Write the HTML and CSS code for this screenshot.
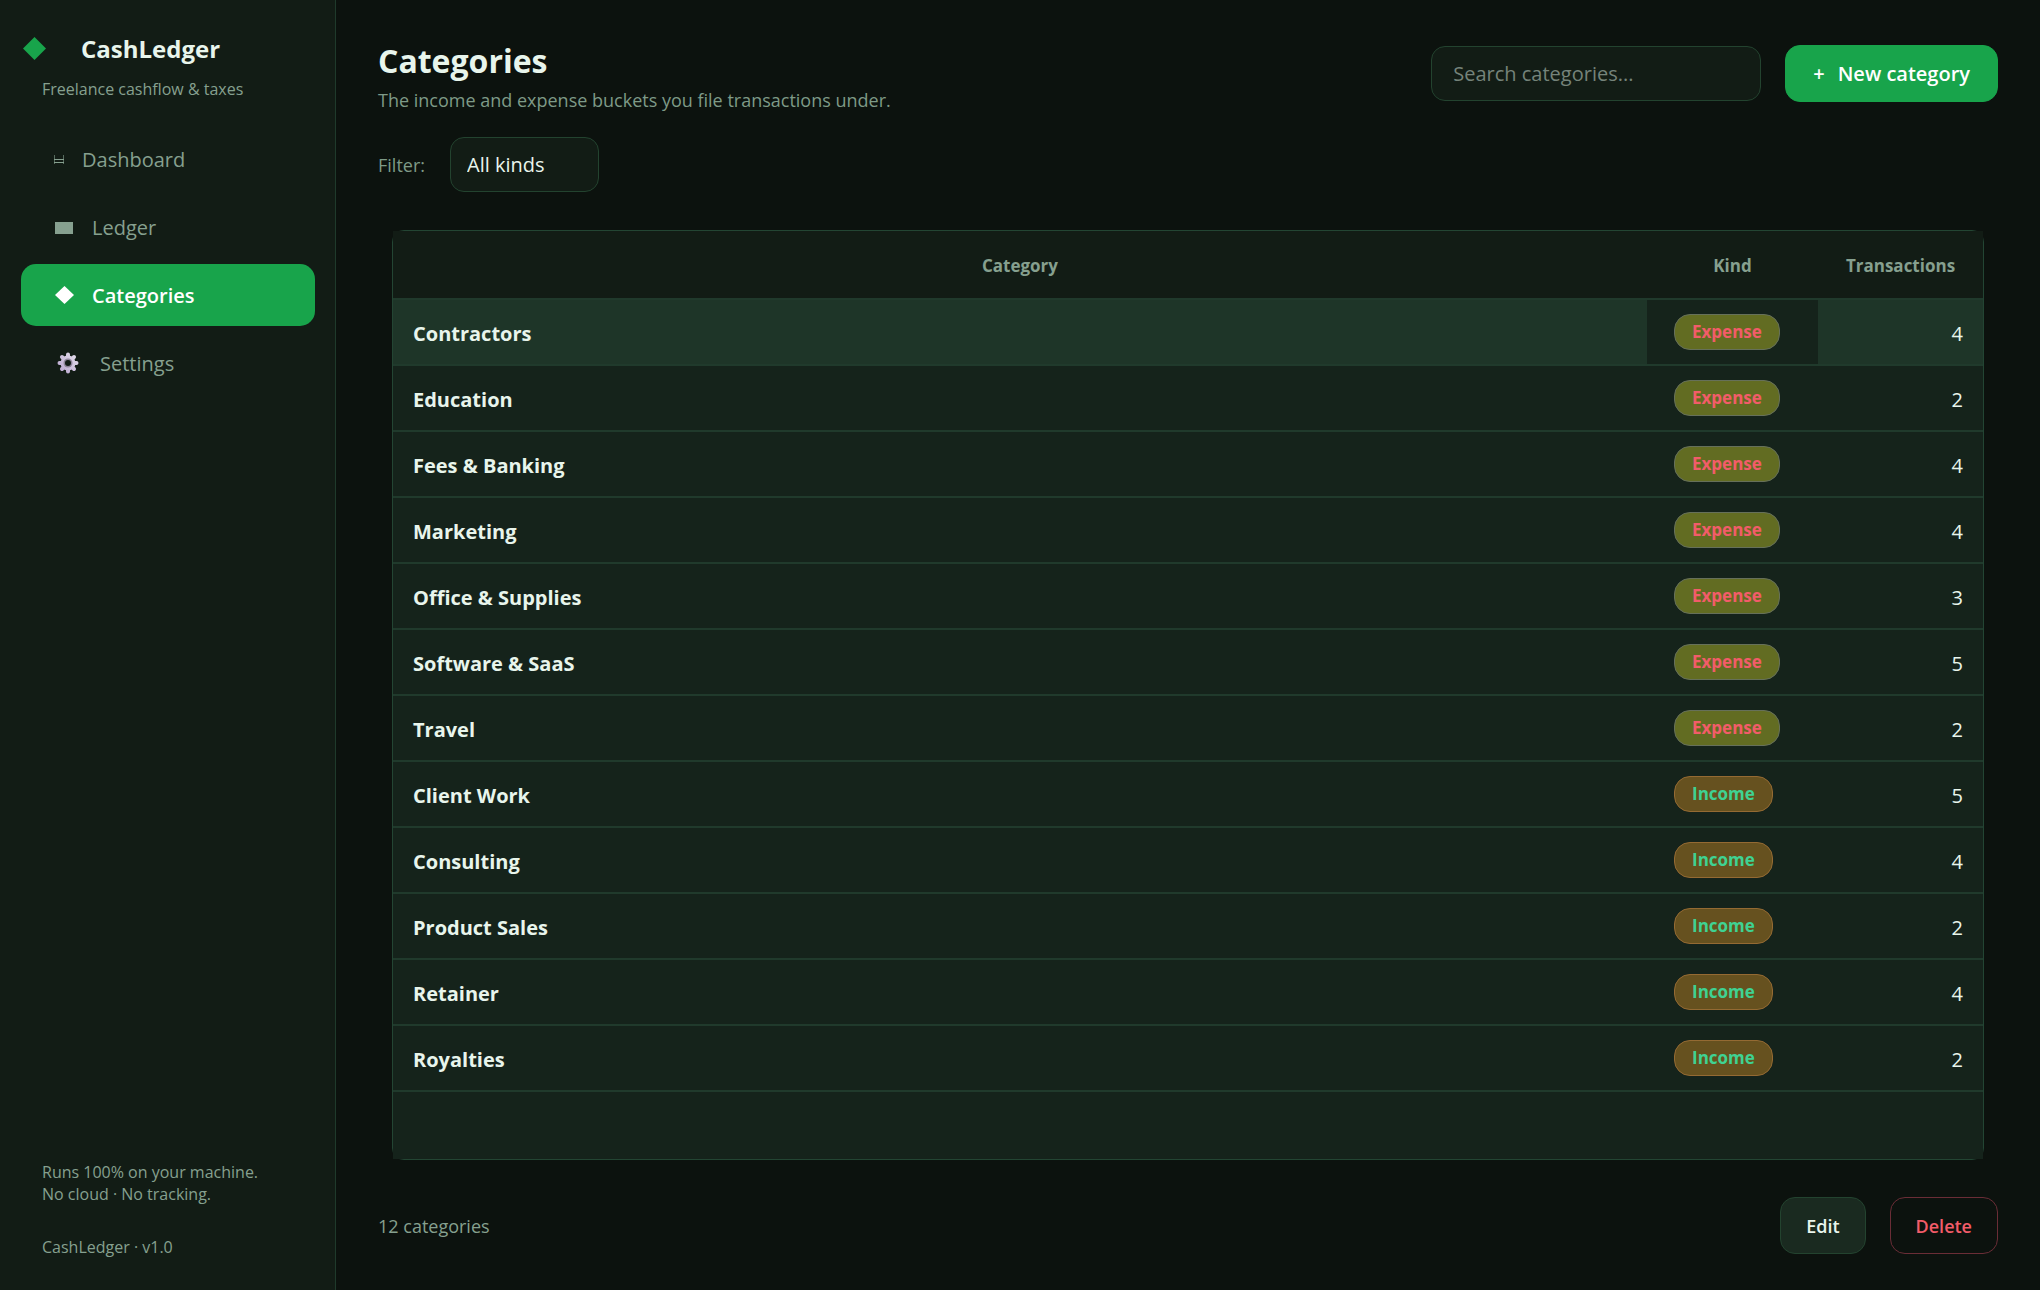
FILE: index.html
```html
<!DOCTYPE html>
<html lang="en">
<head>
  <meta charset="UTF-8" />
  <meta name="viewport" content="width=device-width, initial-scale=1" />
  <title>CashLedger - Categories</title>
  <link rel="stylesheet" href="styles.css">
</head>
<body>

  <!-- Sidebar -->
  <aside class="sidebar">
    <div class="brand">
      <svg class="brand-mark" viewBox="0 0 24 24"><path d="M11.5 0 23 11.5 11.5 23 0 11.5z" fill="currentColor"/></svg>
      <span class="brand-name">CashLedger</span>
    </div>
    <p class="tagline">Freelance cashflow &amp; taxes</p>

    <nav class="nav">
      <a href="#" class="nav-item">
        <svg class="icon-dashboard" viewBox="0 0 10 12"><path d="M0.5 2v9M9.5 2v9" fill="none" stroke="currentColor" opacity="0.6"/><path d="M0 6.5h10M0 9.5h10" fill="none" stroke="currentColor"/></svg>
        Dashboard
      </a>
      <a href="#" class="nav-item">
        <svg class="icon" viewBox="0 0 20 20"><path d="M1 5h18v12H1z" fill="currentColor"/></svg>
        Ledger
      </a>
      <a href="#" class="nav-item active">
        <svg class="icon" viewBox="0 0 20 20"><path d="M10.5 1 20 10 10.5 19 1 10z" fill="currentColor"/></svg>
        Categories
      </a>
      <a href="#" class="nav-item">
        <svg class="icon-gear" viewBox="-3 0 28 22">
          <defs>
            <linearGradient id="gear" x1="22" y1="0" x2="0" y2="22" gradientUnits="userSpaceOnUse">
              <stop offset="0" stop-color="#e8e4ee"/>
              <stop offset="1" stop-color="#b39fcb"/>
            </linearGradient>
          </defs>
          <g stroke="url(#gear)" stroke-width="4" stroke-linecap="round">
            <path d="M11 2.5v17M2.5 11h17M5 5l12 12M17 5 5 17"/>
          </g>
          <circle cx="11" cy="11" r="7.5" fill="url(#gear)"/>
          <circle cx="11" cy="11" r="4.5" fill="#8d8499"/>
          <circle cx="11" cy="11" r="3" fill="#121c16"/>
        </svg>
        Settings
      </a>
    </nav>

    <div class="side-foot">
      <p>Runs 100% on your machine.<br>No cloud · No tracking.</p>
      <p>CashLedger · v1.0</p>
    </div>
  </aside>

  <!-- Main content -->
  <main class="main">
    <header class="header">
      <div class="titles">
        <h1>Categories</h1>
        <p>The income and expense buckets you file transactions under.</p>
      </div>
      <input type="text" class="search" placeholder="Search categories..." aria-label="Search categories">
      <button class="btn primary"><span class="plus">+</span>New category</button>
    </header>

    <div class="filter">
      <label for="kind">Filter:</label>
      <select id="kind">
        <option>All kinds</option>
        <option>Expense</option>
        <option>Income</option>
      </select>
    </div>

    <div class="table-frame">
      <div class="table-fill">
        <table>
          <thead>
            <tr><th>Category</th><th class="col-kind">Kind</th><th class="col-count">Transactions</th></tr>
          </thead>
          <tbody>
            <tr class="selected"><td>Contractors</td><td><span class="badge expense">Expense</span></td><td>4</td></tr>
            <tr><td>Education</td><td><span class="badge expense">Expense</span></td><td>2</td></tr>
            <tr><td>Fees &amp; Banking</td><td><span class="badge expense">Expense</span></td><td>4</td></tr>
            <tr><td>Marketing</td><td><span class="badge expense">Expense</span></td><td>4</td></tr>
            <tr><td>Office &amp; Supplies</td><td><span class="badge expense">Expense</span></td><td>3</td></tr>
            <tr><td>Software &amp; SaaS</td><td><span class="badge expense">Expense</span></td><td>5</td></tr>
            <tr><td>Travel</td><td><span class="badge expense">Expense</span></td><td>2</td></tr>
            <tr><td>Client Work</td><td><span class="badge income">Income</span></td><td>5</td></tr>
            <tr><td>Consulting</td><td><span class="badge income">Income</span></td><td>4</td></tr>
            <tr><td>Product Sales</td><td><span class="badge income">Income</span></td><td>2</td></tr>
            <tr><td>Retainer</td><td><span class="badge income">Income</span></td><td>4</td></tr>
            <tr><td>Royalties</td><td><span class="badge income">Income</span></td><td>2</td></tr>
          </tbody>
        </table>
      </div>
    </div>

    <footer class="actions">
      <span class="count">12 categories</span>
      <button class="btn">Edit</button>
      <button class="btn danger">Delete</button>
    </footer>
  </main>

</body>
</html>
```
FILE: styles.css
```css
* {
  box-sizing: border-box;
}

body {
  margin: 0;
  min-height: 100vh;
  display: flex;
  background-color: #0c120e;
  color: #e8f5ec;
  font-family: "Open Sans", "Noto Sans", sans-serif;
  font-size: 20px;
}

h1, p {
  margin: 0;
}

button, input, select {
  font: inherit;
  color: inherit;
}

/* Sidebar */
.sidebar {
  width: 336px;
  flex-shrink: 0;
  display: flex;
  flex-direction: column;
  background-color: #121c15;
  border-right: 1px solid #1f3a2b;
  padding: 32px 20px 32px 21px;
  color: #86a08f;
}

.brand {
  display: flex;
  align-items: center;
  gap: 34px;
  padding-left: 2px;
  height: 33px;
}

.brand-mark {
  width: 24px;
  height: 24px;
  color: #18a44b;
}

.brand-name {
  font-size: 24px;
  line-height: 32px;
  font-weight: bold;
  color: #e8f5ec;
}

.tagline {
  padding: 13px 21px 0;
  font-size: 16px;
  line-height: 22px;
}

.nav {
  display: flex;
  flex-direction: column;
  gap: 6px;
  margin-top: 28px;
}

.nav-item {
  display: flex;
  align-items: center;
  gap: 18px;
  height: 62px;
  padding: 0 33px;
  border-radius: 15px;
  color: inherit;
  text-decoration: none;
}

.nav-item.active {
  background-color: #18a44b;
  color: #fff;
  font-weight: 600;
}

.icon {
  width: 20px;
  height: 20px;
}

.icon-dashboard {
  width: 10px;
  height: 12px;
}

.icon-gear {
  width: 28px;
  height: 22px;
}

.side-foot {
  margin-top: auto;
  padding: 0 21px;
  font-size: 16px;
  line-height: 22px;
}

.side-foot p + p {
  margin-top: 31px;
}

/* Main */
.main {
  flex: 1;
  display: flex;
  flex-direction: column;
  padding: 34px 42px 36px;
}

.header {
  display: flex;
  align-items: center;
  gap: 24px;
}

.titles {
  flex: 1;
}

h1 {
  font-size: 32px;
  line-height: 54px;
}

.titles p {
  font-size: 18px;
  line-height: 24px;
  color: #7e9a87;
}

.search {
  width: 330px;
  height: 55px;
  padding: 0 21px;
  background-color: #121c15;
  border: 1px solid #23432f;
  border-radius: 14px;
}

.search::placeholder {
  color: #75837a;
}

.btn {
  height: 57px;
  padding: 0 25px;
  background-color: #1a2a20;
  border: 1px solid #23432f;
  border-radius: 15px;
  font-size: 18px;
  font-weight: 600;
  cursor: pointer;
}

.btn.primary {
  padding: 0 27px;
  background-color: #18a44b;
  border-color: #18a44b;
  color: #fff;
  font-size: 20px;
}

.plus {
  margin-right: 13px;
}

.btn.danger {
  background-color: transparent;
  border-color: #6a2d36;
  color: #f25c69;
}

.filter {
  display: flex;
  align-items: center;
  gap: 25px;
  margin-top: 25px;
}

.filter label {
  font-size: 18px;
  color: #7e9a87;
}

.filter select {
  appearance: none;
  width: 149px;
  height: 55px;
  padding: 0 16px;
  background-color: #121c15;
  border: 1px solid #23432f;
  border-radius: 14px;
}

/* Table */
.table-frame {
  flex: 1;
  margin: 38px 14px 37px;
  border: 1px solid #234533;
  border-radius: 12px;
}

/* square corners sit on top of the rounded frame */
.table-fill {
  height: 100%;
  background-color: #15231b;
}

table {
  width: 100%;
  border-collapse: collapse;
  table-layout: fixed;
}

th, td {
  padding: 2px 20px 0;
  height: 66px;
  border-bottom: 2px solid #203a2c;
}

th {
  height: 68px;
  background-color: #121c15;
  color: #86a08f;
  font-size: 17px;
  font-weight: bold;
}

.col-kind {
  width: 171px;
}

.col-count {
  width: 165px;
}

td:first-child {
  font-weight: bold;
}

td:nth-child(2) {
  padding: 0 20px 0 27px;
}

td:last-child {
  text-align: right;
}

.selected td {
  background-color: #1e3528;
}

.selected td:nth-child(2) {
  background-color: #15231b;
}

.badge {
  display: inline-block;
  padding: 0 17px;
  border: 1px solid;
  border-radius: 16px;
  font-size: 17px;
  line-height: 34px;
  font-weight: bold;
}

.expense {
  background-color: #626c22;
  border-color: #66705a;
  color: #f25c69;
}

.income {
  background-color: #66511f;
  border-color: #946a33;
  color: #3fd292;
}

/* Bottom bar */
.actions {
  display: flex;
  align-items: center;
  gap: 24px;
}

.count {
  flex: 1;
  font-size: 18px;
  color: #86a08f;
}
```
